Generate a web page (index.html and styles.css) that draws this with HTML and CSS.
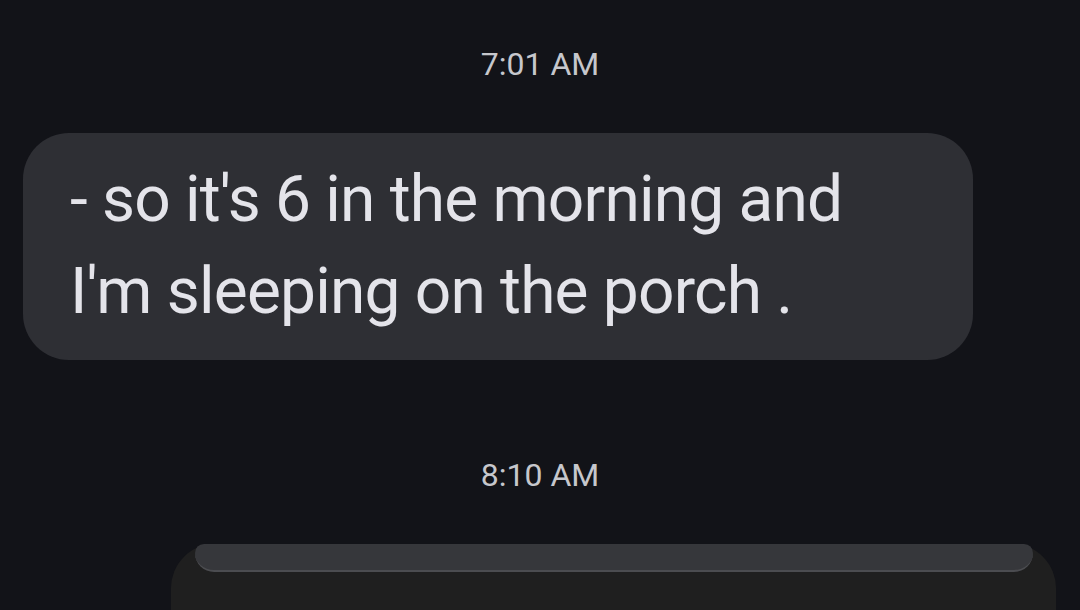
FILE: index.html
```html
<!DOCTYPE html>
<html lang="en">
<head>
    <meta charset="UTF-8">
    <meta name="viewport" content="width=device-width, initial-scale=1.0">
    <title>Messages</title>
    <link rel="stylesheet" href="styles.css">
</head>
<body>
    <main class="thread">
        <div class="stamp first">7:01 AM</div>

        <div class="row incoming">
            <div class="bubble">
                <p>- so it's 6 in the morning and<br>I'm sleeping on the porch .</p>
            </div>
        </div>

        <div class="stamp second">8:10 AM</div>

        <!-- attachment preview, cut off by the bottom of the screen -->
        <div class="row outgoing">
            <div class="card">
                <div class="card-top"></div>
            </div>
        </div>
    </main>
</body>
</html>
```

FILE: styles.css
```css
body {
    margin: 0;
    padding: 0;
    background-color: #121318;
    font-family: 'Roboto', 'Noto Sans', sans-serif;
    overflow: hidden;
}

.thread {
    display: flex;
    flex-direction: column;
    height: 610px;
    overflow: hidden;
}

/* Timestamps */
.stamp {
    text-align: center;
    color: #c6c7cc;
    font-size: 32px;
    line-height: 40px;
}

.stamp.first {
    margin-top: 44px;
    margin-bottom: 49px;
}

.stamp.second {
    margin-top: 95px;
    margin-bottom: 49px;
}

/* Message rows */
.row {
    display: flex;
}

.incoming {
    padding-left: 23px;
}

.outgoing {
    justify-content: flex-end;
    padding-right: 24px;
}

.bubble {
    width: 950px;
    box-sizing: border-box;
    background: #2e2f34;
    border-radius: 46px;
    padding: 21px 40px 22px 47px;
}

.bubble p {
    margin: 0;
    color: #e4e4ea;
    font-size: 64px;
    letter-spacing: -0.8px;
    line-height: 92px;
}

.card {
    width: 885px;
    height: 66px;
    background: #1f1f1f;
    border-radius: 44px 44px 0 0;
    display: flex;
    justify-content: center;
}

.card-top {
    width: 838px;
    height: 26px;
    background: #36373b;
    border-radius: 14px 14px 30px 30px;
    border-bottom: 2px solid #4b4c50;
}
```
